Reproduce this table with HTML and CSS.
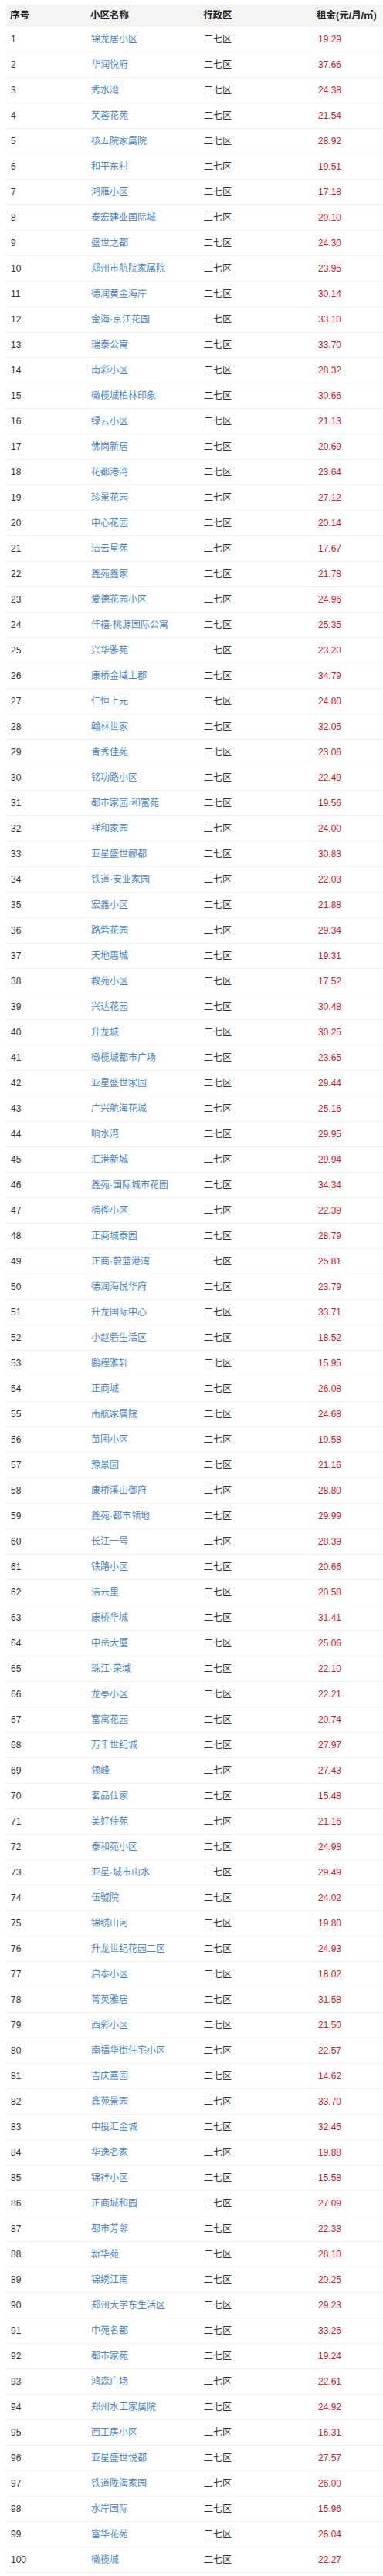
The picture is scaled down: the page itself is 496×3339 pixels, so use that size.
FILE: index.html
```html
<!DOCTYPE html>
<html lang="zh-CN">
<head>
<meta charset="utf-8">
<title>二七区小区租金</title>
<link rel="stylesheet" href="styles.css">
</head>
<body>
<table class="rent-table">
<colgroup>
<col class="c-no"><col class="c-name"><col class="c-dist"><col class="c-rent">
</colgroup>
<thead>
<tr><th>序号</th><th>小区名称</th><th>行政区</th><th>租金(元/月/㎡)</th></tr>
</thead>
<tbody>
<tr><td>1</td><td class="name">锦龙居小区</td><td>二七区</td><td class="rent">19.29</td></tr>
<tr><td>2</td><td class="name">华润悦府</td><td>二七区</td><td class="rent">37.66</td></tr>
<tr><td>3</td><td class="name">秀水湾</td><td>二七区</td><td class="rent">24.38</td></tr>
<tr><td>4</td><td class="name">芙蓉花苑</td><td>二七区</td><td class="rent">21.54</td></tr>
<tr><td>5</td><td class="name">核五院家属院</td><td>二七区</td><td class="rent">28.92</td></tr>
<tr><td>6</td><td class="name">和平东村</td><td>二七区</td><td class="rent">19.51</td></tr>
<tr><td>7</td><td class="name">鸿雁小区</td><td>二七区</td><td class="rent">17.18</td></tr>
<tr><td>8</td><td class="name">泰宏建业国际城</td><td>二七区</td><td class="rent">20.10</td></tr>
<tr><td>9</td><td class="name">盛世之都</td><td>二七区</td><td class="rent">24.30</td></tr>
<tr><td>10</td><td class="name">郑州市航院家属院</td><td>二七区</td><td class="rent">23.95</td></tr>
<tr><td>11</td><td class="name">德润黄金海岸</td><td>二七区</td><td class="rent">30.14</td></tr>
<tr><td>12</td><td class="name">金海·京江花园</td><td>二七区</td><td class="rent">33.10</td></tr>
<tr><td>13</td><td class="name">瑞泰公寓</td><td>二七区</td><td class="rent">33.70</td></tr>
<tr><td>14</td><td class="name">南彩小区</td><td>二七区</td><td class="rent">28.32</td></tr>
<tr><td>15</td><td class="name">橄榄城柏林印象</td><td>二七区</td><td class="rent">30.66</td></tr>
<tr><td>16</td><td class="name">绿云小区</td><td>二七区</td><td class="rent">21.13</td></tr>
<tr><td>17</td><td class="name">佛岗新居</td><td>二七区</td><td class="rent">20.69</td></tr>
<tr><td>18</td><td class="name">花都港湾</td><td>二七区</td><td class="rent">23.64</td></tr>
<tr><td>19</td><td class="name">珍景花园</td><td>二七区</td><td class="rent">27.12</td></tr>
<tr><td>20</td><td class="name">中心花园</td><td>二七区</td><td class="rent">20.14</td></tr>
<tr><td>21</td><td class="name">洁云星苑</td><td>二七区</td><td class="rent">17.67</td></tr>
<tr><td>22</td><td class="name">鑫苑鑫家</td><td>二七区</td><td class="rent">21.78</td></tr>
<tr><td>23</td><td class="name">爱德花园小区</td><td>二七区</td><td class="rent">24.96</td></tr>
<tr><td>24</td><td class="name">仟禧·桃源国际公寓</td><td>二七区</td><td class="rent">25.35</td></tr>
<tr><td>25</td><td class="name">兴华雅苑</td><td>二七区</td><td class="rent">23.20</td></tr>
<tr><td>26</td><td class="name">康桥金域上郡</td><td>二七区</td><td class="rent">34.79</td></tr>
<tr><td>27</td><td class="name">仁恒上元</td><td>二七区</td><td class="rent">24.80</td></tr>
<tr><td>28</td><td class="name">翰林世家</td><td>二七区</td><td class="rent">32.05</td></tr>
<tr><td>29</td><td class="name">青秀佳苑</td><td>二七区</td><td class="rent">23.06</td></tr>
<tr><td>30</td><td class="name">铭功路小区</td><td>二七区</td><td class="rent">22.49</td></tr>
<tr><td>31</td><td class="name">都市家园·和富苑</td><td>二七区</td><td class="rent">19.56</td></tr>
<tr><td>32</td><td class="name">祥和家园</td><td>二七区</td><td class="rent">24.00</td></tr>
<tr><td>33</td><td class="name">亚星盛世郦都</td><td>二七区</td><td class="rent">30.83</td></tr>
<tr><td>34</td><td class="name">铁道·安业家园</td><td>二七区</td><td class="rent">22.03</td></tr>
<tr><td>35</td><td class="name">宏鑫小区</td><td>二七区</td><td class="rent">21.88</td></tr>
<tr><td>36</td><td class="name">路砦花园</td><td>二七区</td><td class="rent">29.34</td></tr>
<tr><td>37</td><td class="name">天地惠城</td><td>二七区</td><td class="rent">19.31</td></tr>
<tr><td>38</td><td class="name">教苑小区</td><td>二七区</td><td class="rent">17.52</td></tr>
<tr><td>39</td><td class="name">兴达花园</td><td>二七区</td><td class="rent">30.48</td></tr>
<tr><td>40</td><td class="name">升龙城</td><td>二七区</td><td class="rent">30.25</td></tr>
<tr><td>41</td><td class="name">橄榄城都市广场</td><td>二七区</td><td class="rent">23.65</td></tr>
<tr><td>42</td><td class="name">亚星盛世家园</td><td>二七区</td><td class="rent">29.44</td></tr>
<tr><td>43</td><td class="name">广兴航海花城</td><td>二七区</td><td class="rent">25.16</td></tr>
<tr><td>44</td><td class="name">响水湾</td><td>二七区</td><td class="rent">29.95</td></tr>
<tr><td>45</td><td class="name">汇港新城</td><td>二七区</td><td class="rent">29.94</td></tr>
<tr><td>46</td><td class="name">鑫苑·国际城市花园</td><td>二七区</td><td class="rent">34.34</td></tr>
<tr><td>47</td><td class="name">楠桦小区</td><td>二七区</td><td class="rent">22.39</td></tr>
<tr><td>48</td><td class="name">正商城泰园</td><td>二七区</td><td class="rent">28.79</td></tr>
<tr><td>49</td><td class="name">正商·蔚蓝港湾</td><td>二七区</td><td class="rent">25.81</td></tr>
<tr><td>50</td><td class="name">德润海悦华府</td><td>二七区</td><td class="rent">23.79</td></tr>
<tr><td>51</td><td class="name">升龙国际中心</td><td>二七区</td><td class="rent">33.71</td></tr>
<tr><td>52</td><td class="name">小赵砦生活区</td><td>二七区</td><td class="rent">18.52</td></tr>
<tr><td>53</td><td class="name">鹏程雅轩</td><td>二七区</td><td class="rent">15.95</td></tr>
<tr><td>54</td><td class="name">正商城</td><td>二七区</td><td class="rent">26.08</td></tr>
<tr><td>55</td><td class="name">南航家属院</td><td>二七区</td><td class="rent">24.68</td></tr>
<tr><td>56</td><td class="name">苗圃小区</td><td>二七区</td><td class="rent">19.58</td></tr>
<tr><td>57</td><td class="name">豫景园</td><td>二七区</td><td class="rent">21.16</td></tr>
<tr><td>58</td><td class="name">康桥溪山御府</td><td>二七区</td><td class="rent">28.80</td></tr>
<tr><td>59</td><td class="name">鑫苑·都市领地</td><td>二七区</td><td class="rent">29.99</td></tr>
<tr><td>60</td><td class="name">长江一号</td><td>二七区</td><td class="rent">28.39</td></tr>
<tr><td>61</td><td class="name">铁路小区</td><td>二七区</td><td class="rent">20.66</td></tr>
<tr><td>62</td><td class="name">洁云里</td><td>二七区</td><td class="rent">20.58</td></tr>
<tr><td>63</td><td class="name">康桥华城</td><td>二七区</td><td class="rent">31.41</td></tr>
<tr><td>64</td><td class="name">中岳大厦</td><td>二七区</td><td class="rent">25.06</td></tr>
<tr><td>65</td><td class="name">珠江·荣域</td><td>二七区</td><td class="rent">22.10</td></tr>
<tr><td>66</td><td class="name">龙亭小区</td><td>二七区</td><td class="rent">22.21</td></tr>
<tr><td>67</td><td class="name">富寓花园</td><td>二七区</td><td class="rent">20.74</td></tr>
<tr><td>68</td><td class="name">万千世纪城</td><td>二七区</td><td class="rent">27.97</td></tr>
<tr><td>69</td><td class="name">领峰</td><td>二七区</td><td class="rent">27.43</td></tr>
<tr><td>70</td><td class="name">茗品仕家</td><td>二七区</td><td class="rent">15.48</td></tr>
<tr><td>71</td><td class="name">美好佳苑</td><td>二七区</td><td class="rent">21.16</td></tr>
<tr><td>72</td><td class="name">泰和苑小区</td><td>二七区</td><td class="rent">24.98</td></tr>
<tr><td>73</td><td class="name">亚星·城市山水</td><td>二七区</td><td class="rent">29.49</td></tr>
<tr><td>74</td><td class="name">伍號院</td><td>二七区</td><td class="rent">24.02</td></tr>
<tr><td>75</td><td class="name">锦绣山河</td><td>二七区</td><td class="rent">19.80</td></tr>
<tr><td>76</td><td class="name">升龙世纪花园二区</td><td>二七区</td><td class="rent">24.93</td></tr>
<tr><td>77</td><td class="name">启泰小区</td><td>二七区</td><td class="rent">18.02</td></tr>
<tr><td>78</td><td class="name">菁英雅居</td><td>二七区</td><td class="rent">31.58</td></tr>
<tr><td>79</td><td class="name">西彩小区</td><td>二七区</td><td class="rent">21.50</td></tr>
<tr><td>80</td><td class="name">南福华街住宅小区</td><td>二七区</td><td class="rent">22.57</td></tr>
<tr><td>81</td><td class="name">吉庆嘉园</td><td>二七区</td><td class="rent">14.62</td></tr>
<tr><td>82</td><td class="name">鑫苑景园</td><td>二七区</td><td class="rent">33.70</td></tr>
<tr><td>83</td><td class="name">中投汇金城</td><td>二七区</td><td class="rent">32.45</td></tr>
<tr><td>84</td><td class="name">华逸名家</td><td>二七区</td><td class="rent">19.88</td></tr>
<tr><td>85</td><td class="name">锦祥小区</td><td>二七区</td><td class="rent">15.58</td></tr>
<tr><td>86</td><td class="name">正商城和园</td><td>二七区</td><td class="rent">27.09</td></tr>
<tr><td>87</td><td class="name">都市芳邻</td><td>二七区</td><td class="rent">22.33</td></tr>
<tr><td>88</td><td class="name">新华苑</td><td>二七区</td><td class="rent">28.10</td></tr>
<tr><td>89</td><td class="name">锦绣江南</td><td>二七区</td><td class="rent">20.25</td></tr>
<tr><td>90</td><td class="name">郑州大学东生活区</td><td>二七区</td><td class="rent">29.23</td></tr>
<tr><td>91</td><td class="name">中苑名都</td><td>二七区</td><td class="rent">33.26</td></tr>
<tr><td>92</td><td class="name">都市家苑</td><td>二七区</td><td class="rent">19.24</td></tr>
<tr><td>93</td><td class="name">鸿森广场</td><td>二七区</td><td class="rent">22.61</td></tr>
<tr><td>94</td><td class="name">郑州水工家属院</td><td>二七区</td><td class="rent">24.92</td></tr>
<tr><td>95</td><td class="name">西工房小区</td><td>二七区</td><td class="rent">16.31</td></tr>
<tr><td>96</td><td class="name">亚星盛世悦都</td><td>二七区</td><td class="rent">27.57</td></tr>
<tr><td>97</td><td class="name">铁道陇海家园</td><td>二七区</td><td class="rent">26.00</td></tr>
<tr><td>98</td><td class="name">水岸国际</td><td>二七区</td><td class="rent">15.96</td></tr>
<tr><td>99</td><td class="name">富华花苑</td><td>二七区</td><td class="rent">26.04</td></tr>
<tr><td>100</td><td class="name">橄榄城</td><td>二七区</td><td class="rent">22.27</td></tr>
</tbody>
</table>
</body>
</html>
```
FILE: styles.css
```css
html, body {
  background: #ffffff;
}
body {
  margin: 6px 0 0 8px;
  font-family: "Liberation Sans", Arial, "Noto Sans CJK SC", sans-serif;
  font-size: 12px;
  color: #333333;
}
.rent-table {
  width: 488px;
  border-collapse: separate;
  border-spacing: 0;
  table-layout: fixed;
}
.c-no { width: 104px; }
.c-name { width: 146px; }
.c-dist { width: 147px; }
.c-rent { width: 91px; }
.rent-table th {
  background: #f4f4f4;
  color: #222222;
  font-weight: bold;
  font-size: 12.5px;
  text-align: left;
  line-height: 29px;
  padding: 0 5px;
  white-space: nowrap;
}
.rent-table td {
  line-height: 32px;
  padding: 0 5px 0 6px;
  border-bottom: 1px solid #eeeeee;
  white-space: nowrap;
  text-align: left;
}
.rent-table td.name {
  color: #4a85c5;
}
.rent-table td.rent {
  color: #c8202c;
  padding-left: 7px;
}
```
